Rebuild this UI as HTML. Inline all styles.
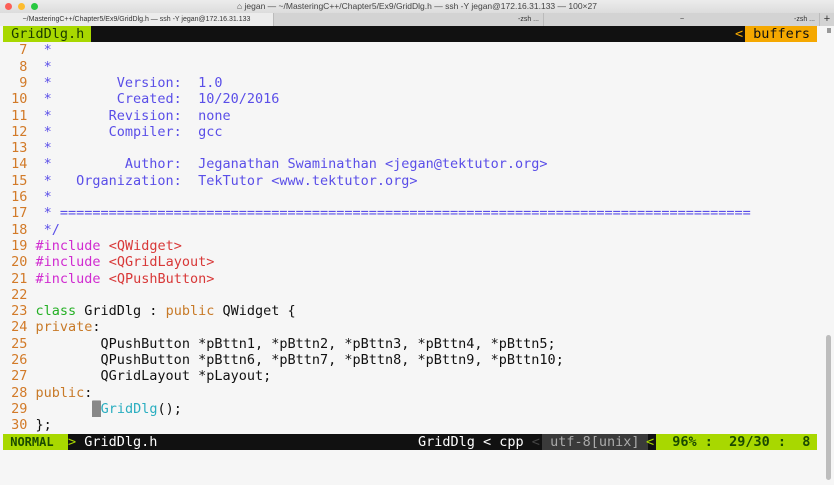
<!DOCTYPE html>
<html><head><meta charset="utf-8"><style>
body{margin:0;width:834px;height:485px;overflow:hidden;background:#f6f6f6;font-family:"Liberation Sans",sans-serif;position:relative}
.tb{position:absolute;left:0;top:0;width:834px;height:13px;background:linear-gradient(#ececec,#dcdcdc);font-size:8.5px;color:#444;text-align:center;line-height:13px}
.dot{position:absolute;top:3px;width:7px;height:7px;border-radius:50%}
.tabs{position:absolute;left:0;top:13px;width:834px;height:13px;background:#d3d3d3;font-size:7px;color:#333;line-height:13px}
.tab{position:absolute;top:0;height:13px;border-right:1px solid #bbb;text-align:center}
.m{position:absolute;left:0;font-family:"DejaVu Sans Mono","Liberation Mono",monospace;font-size:13.5px;white-space:pre;height:16.3px;line-height:16.3px;color:#111}
.code .m{left:3px}
.n{color:#d27a28}.c{color:#5a4ee8}.i{color:#d02ad0}.s{color:#d83838}.k{color:#25b025}.o{color:#c87a28}.f{color:#2aaec0}
</style></head><body>
<div class="tb"><span class="dot" style="left:5px;background:#fc5f57"></span><span class="dot" style="left:18px;background:#fdbc2e"></span><span class="dot" style="left:31px;background:#28c840"></span>⌂ jegan — ~/MasteringC++/Chapter5/Ex9/GridDlg.h — ssh -Y jegan@172.16.31.133 — 100×27</div>
<div class="tabs"><div class="tab" style="left:0;width:273px;background:#ececec">~/MasteringC++/Chapter5/Ex9/GridDlg.h — ssh -Y jegan@172.16.31.133</div><div class="tab" style="left:274px;width:270px;text-align:right;padding-right:4px;box-sizing:border-box">-zsh ...</div><div class="tab" style="left:545px;width:274px">~</div><div class="tab" style="left:745px;width:74px;text-align:right;padding-right:4px;box-sizing:border-box;border:none">-zsh ...</div><div class="tab" style="left:820px;width:14px;font-size:11px;border:none">+</div></div>
<div style="position:absolute;left:3px;top:26px;width:814px;height:16px;background:#111"></div>
<div class="m" style="top:26px;left:3px;background:#a8d800;width:88px;color:#1a3a00">&nbsp;GridDlg.h</div>
<div class="m" style="top:26px;left:735px;color:#f5a800">&lt;</div>
<div class="m" style="top:26px;left:745px;width:72px;background:#f5a800;color:#111"> buffers</div>
<div style="position:absolute;left:827px;top:28px;width:4px;height:5px;background:#999"></div>
<div style="position:absolute;left:826px;top:335px;width:5px;height:145px;background:#bdbdbd;border-radius:3px"></div>
<div class="code">
<div class="m" style="top:42.3px"><span class="n">  7 </span><span class="c"> *</span></div>
<div class="m" style="top:58.6px"><span class="n">  8 </span><span class="c"> *</span></div>
<div class="m" style="top:74.9px"><span class="n">  9 </span><span class="c"> *        Version:  1.0</span></div>
<div class="m" style="top:91.2px"><span class="n"> 10 </span><span class="c"> *        Created:  10/20/2016</span></div>
<div class="m" style="top:107.5px"><span class="n"> 11 </span><span class="c"> *       Revision:  none</span></div>
<div class="m" style="top:123.8px"><span class="n"> 12 </span><span class="c"> *       Compiler:  gcc</span></div>
<div class="m" style="top:140.1px"><span class="n"> 13 </span><span class="c"> *</span></div>
<div class="m" style="top:156.4px"><span class="n"> 14 </span><span class="c"> *         Author:  Jeganathan Swaminathan &lt;jegan@tektutor.org&gt;</span></div>
<div class="m" style="top:172.7px"><span class="n"> 15 </span><span class="c"> *   Organization:  TekTutor &lt;www.tektutor.org&gt;</span></div>
<div class="m" style="top:189px"><span class="n"> 16 </span><span class="c"> *</span></div>
<div class="m" style="top:205.3px"><span class="n"> 17 </span><span class="c"> * =====================================================================================</span></div>
<div class="m" style="top:221.6px"><span class="n"> 18 </span><span class="c"> */</span></div>
<div class="m" style="top:237.9px"><span class="n"> 19 </span><span class="i">#include</span> <span class="s">&lt;QWidget&gt;</span></div>
<div class="m" style="top:254.2px"><span class="n"> 20 </span><span class="i">#include</span> <span class="s">&lt;QGridLayout&gt;</span></div>
<div class="m" style="top:270.5px"><span class="n"> 21 </span><span class="i">#include</span> <span class="s">&lt;QPushButton&gt;</span></div>
<div class="m" style="top:286.8px"><span class="n"> 22 </span></div>
<div class="m" style="top:303.1px"><span class="n"> 23 </span><span class="k">class</span> GridDlg : <span class="o">public</span> QWidget {</div>
<div class="m" style="top:319.4px"><span class="n"> 24 </span><span class="o">private</span>:</div>
<div class="m" style="top:335.7px"><span class="n"> 25 </span>        QPushButton *pBttn1, *pBttn2, *pBttn3, *pBttn4, *pBttn5;</div>
<div class="m" style="top:352px"><span class="n"> 26 </span>        QPushButton *pBttn6, *pBttn7, *pBttn8, *pBttn9, *pBttn10;</div>
<div class="m" style="top:368.3px"><span class="n"> 27 </span>        QGridLayout *pLayout;</div>
<div class="m" style="top:384.6px"><span class="n"> 28 </span><span class="o">public</span>:</div>
<div class="m" style="top:400.9px"><span class="n"> 29 </span>       <span style="background:#888;color:#888">█</span><span class="f">GridDlg</span>();</div>
<div class="m" style="top:417.2px"><span class="n"> 30 </span>};</div>
</div>
<div style="position:absolute;left:3px;top:434px;width:814px;height:16px;background:#111"></div>
<div class="m" style="top:434px;left:3px;width:65px;background:#a8d800;color:#1a4a00;font-weight:bold;font-size:12px"> NORMAL</div>
<div class="m" style="top:434px;left:68px;color:#a8d800">&gt; <span style="color:#fff">GridDlg.h</span></div>
<div class="m" style="top:434px;left:418px;color:#fff">GridDlg &lt; cpp <span style="color:#444">&lt;</span></div>
<div class="m" style="top:434px;left:542px;width:106px;background:#3a3a3a;color:#aaa"> utf-8[unix]</div>
<div class="m" style="top:434px;left:646px;color:#a8d800">&lt;</div>
<div class="m" style="top:434px;left:656px;width:161px;background:#a8d800;color:#1a4a00;font-weight:bold">  96% :  29/30 :  8</div>
</body></html>
